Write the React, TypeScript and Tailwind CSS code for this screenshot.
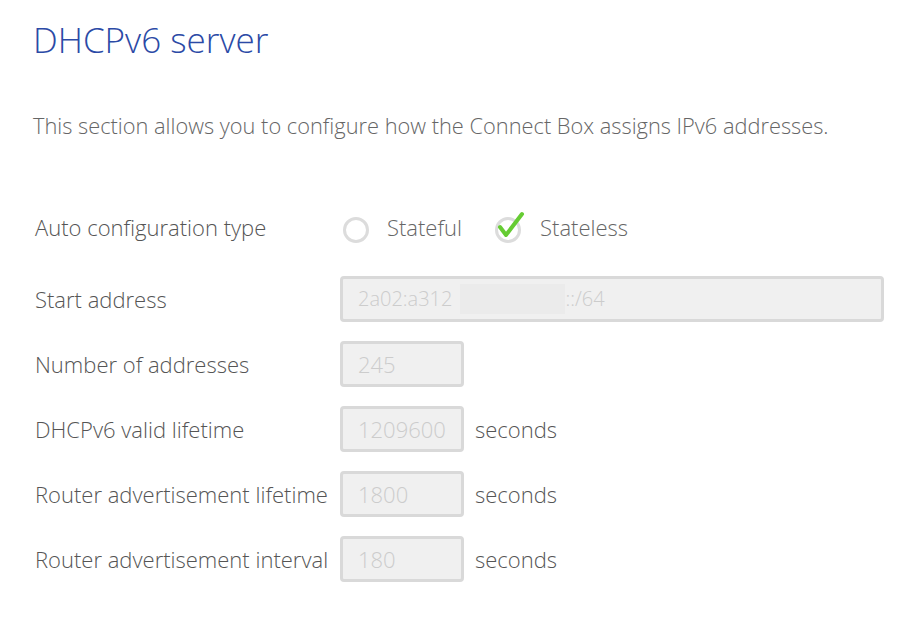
const font = { fontFamily: '"Open Sans", "Noto Sans", sans-serif' };

const Field = ({ value, width, size = "text-[20px]" }: { value: React.ReactNode; width: string; size?: string }) => (
  <div
    className={`${width} h-[46px] flex items-center pl-[15px] rounded-[4px] border-[3px] border-[#d9d9d9] bg-[#f0f0f0] ${size} font-light text-[#cccccc] overflow-hidden whitespace-nowrap`}
  >
    {value}
  </div>
);

const Row = ({ label, children }: { label: string; children: React.ReactNode }) => (
  <div className="flex items-center h-[46px]">
    <div className="w-[305px] shrink-0 text-[22px] font-light text-[#555555] whitespace-nowrap">{label}</div>
    {children}
  </div>
);

const Ring = ({ checked }: { checked?: boolean }) => (
  <svg width="30" height="34" viewBox="0 0 30 34" className="overflow-visible">
    <circle cx="14" cy="20" r="11.5" fill="none" stroke="#dcdcdc" strokeWidth="3" />
    {checked && (
      <path d="M6 17 L12 25 L28 4" fill="none" stroke="#66cc33" strokeWidth="4" strokeLinecap="round" strokeLinejoin="round" />
    )}
  </svg>
);

const Seconds = () => <span className="ml-[11px] text-[22px] font-light text-[#555555]">seconds</span>;

export default function App() {
  return (
    <div className="w-[904px] h-[617px] bg-white pl-[33px] pt-[19px]" style={font}>
      <h1 className="text-[35px] font-light text-[#2b4aa6] leading-[42px]">DHCPv6 server</h1>
      <p className="mt-[51px] text-[21.8px] font-light text-[#666666] leading-[28px]">
        This section allows you to configure how the Connect Box assigns IPv6 addresses.
      </p>

      <div className="mt-[64px] ml-[2px] flex flex-col gap-[19px]">
        <div className="mb-[7px]">
          <Row label="Auto configuration type">
            <div className="flex items-center text-[22px] font-light text-[#666666]">
              <span className="ml-[2px]"><Ring /></span>
              <span className="ml-[15px]">Stateful</span>
              <span className="ml-[32px]"><Ring checked /></span>
              <span className="ml-[16px]">Stateless</span>
            </div>
          </Row>
        </div>
        <Row label="Start address">
          <Field
            width="w-[544px]"
            value={
              <>
                <span>2a02:a312</span>
                <span className="inline-block ml-[8px] w-[105px] h-[30px] bg-[#ebebeb]" />
                <span>::/64</span>
              </>
            }
          />
        </Row>
        <Row label="Number of addresses">
          <Field width="w-[124px]" size="text-[22px]" value="245" />
        </Row>
        <Row label="DHCPv6 valid lifetime">
          <Field width="w-[124px]" size="text-[22px]" value="1209600" />
          <Seconds />
        </Row>
        <Row label="Router advertisement lifetime">
          <Field width="w-[124px]" size="text-[22px]" value="1800" />
          <Seconds />
        </Row>
        <Row label="Router advertisement interval">
          <Field width="w-[124px]" size="text-[22px]" value="180" />
          <Seconds />
        </Row>
      </div>
    </div>
  );
}
